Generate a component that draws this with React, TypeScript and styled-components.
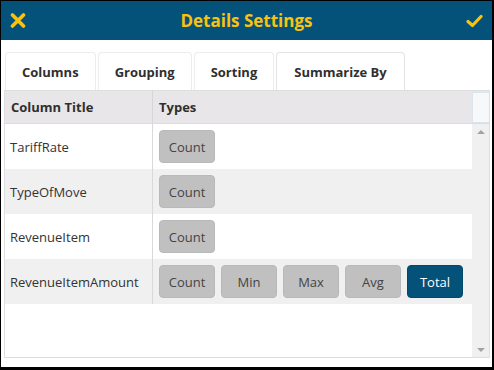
import styled, { createGlobalStyle } from "styled-components";

const GlobalStyle = createGlobalStyle`
	html, body {
		margin: 0;
		padding: 0;
		background: #000;
	}
	* {
		box-sizing: border-box;
	}
`;

const BLUE = "#04517a";
const YELLOW = "#f9c20f";

const Dialog = styled.div`
	width: 494px;
	height: 370px;
	border-style: solid;
	border-color: #000;
	border-width: 1px 2px 3px 1px;
	background: #fff;
	display: flex;
	flex-direction: column;
	font-family: "Open Sans", "Liberation Sans", sans-serif;
	color: #333;
`;

const TitleBar = styled.header`
	height: 39px;
	background: ${BLUE};
	display: flex;
	align-items: center;
	justify-content: space-between;
	padding: 0 8px 0 8px;
`;

const Title = styled.h1`
	margin: 0;
	font-size: 17px;
	font-weight: 700;
	color: ${YELLOW};
`;

const IconButton = styled.button`
	width: 18px;
	height: 18px;
	padding: 0;
	border: none;
	background: transparent;
	display: flex;
	align-items: center;
	justify-content: center;
`;

const Body = styled.div`
	flex: 1;
	display: flex;
	flex-direction: column;
	padding: 12px 2px 9px 3px;
	min-height: 0;
`;

const Tabs = styled.ul`
	display: flex;
	gap: 2px;
	margin: 0;
	padding: 0 0 0 1px;
	list-style: none;
	height: 38px;
`;

const Tab = styled.li<{ $active?: boolean }>`
	display: flex;
	align-items: center;
	padding: 0 ${({ $active }) => ($active ? "17px" : "16px")};
	border: 1px solid ${({ $active }) => ($active ? "#e3e3e3" : "#ececec")};
	border-bottom: none;
	border-radius: 4px 4px 0 0;
	font-size: 13px;
	font-weight: 700;
	color: #2f2f2f;
	background: #fff;
`;

const Grid = styled.div`
	flex: 1;
	display: flex;
	flex-direction: column;
	border: 1px solid #dedede;
	min-height: 0;
`;

const HeaderRow = styled.div`
	display: flex;
	height: 33px;
	background: #e8e6e8;
	border-bottom: 1px solid #dcdcdc;
`;

const HeaderCell = styled.div<{ $w?: number }>`
	${({ $w }) => ($w ? `width: ${$w}px;` : "flex: 1;")}
	display: flex;
	align-items: center;
	padding-left: 6px;
	font-size: 13px;
	font-weight: 700;
	color: #2f2f2f;
	border-right: ${({ $w }) => ($w ? "1px solid #d6d6d6" : "none")};
`;

const Corner = styled.div`
	width: 17px;
	margin-top: 1px;
	background: #f6f8fa;
	border: 1px solid #dde5ec;
	border-right: none;
`;

const BodyArea = styled.div`
	flex: 1;
	display: flex;
	min-height: 0;
`;

const Rows = styled.div`
	flex: 1;
`;

const Row = styled.div<{ $alt?: boolean }>`
	display: flex;
	height: 45px;
	background: ${({ $alt }) => ($alt ? "#f0f0f0" : "#fff")};
`;

const NameCell = styled.div`
	width: 148px;
	display: flex;
	align-items: center;
	padding-left: 5px;
	font-size: 13px;
	color: #333;
	border-right: 1px solid #d9d9d9;
`;

const TypesCell = styled.div`
	flex: 1;
	display: flex;
	align-items: center;
	gap: 6px;
	padding-left: 6px;
`;

const TypeButton = styled.button<{ $on?: boolean }>`
	width: 56px;
	height: 33px;
	border-radius: 4px;
	border: 1px solid ${({ $on }) => ($on ? "#03476b" : "#b9b9b9")};
	background: ${({ $on }) => ($on ? BLUE : "#c0c0c0")};
	color: ${({ $on }) => ($on ? "#fff" : "#444")};
	font-family: inherit;
	font-size: 13px;
	padding: 0;
`;

const Scrollbar = styled.div`
	width: 17px;
	background: #f0f0f0;
	display: flex;
	flex-direction: column;
	justify-content: space-between;
	align-items: center;
	padding: 6px 0 5px;
`;

const Arrow = styled.div<{ $down?: boolean }>`
	width: 0;
	height: 0;
	border-left: 4px solid transparent;
	border-right: 4px solid transparent;
	${({ $down }) =>
		$down ? "border-top: 4px solid #a3a3a3;" : "border-bottom: 4px solid #a3a3a3;"}
`;

const rows = [
	{ name: "TariffRate", types: ["Count"] },
	{ name: "TypeOfMove", types: ["Count"] },
	{ name: "RevenueItem", types: ["Count"] },
	{ name: "RevenueItemAmount", types: ["Count", "Min", "Max", "Avg", "Total"], active: "Total" },
];

function App() {
	return (
		<>
			<GlobalStyle />
			<Dialog>
				<TitleBar>
					<IconButton aria-label="Close">
						<svg width="16" height="15" viewBox="0 0 16 15">
							<path d="M2.5 2 L13.5 13 M13.5 2 L2.5 13" stroke={YELLOW} strokeWidth="3.6" strokeLinecap="round" />
						</svg>
					</IconButton>
					<Title>Details Settings</Title>
					<IconButton aria-label="Save">
						<svg width="17" height="14" viewBox="0 0 17 14">
							<path d="M2 7.5 L6.5 11.5 L15 2.5" stroke={YELLOW} strokeWidth="3.2" fill="none" strokeLinecap="round" strokeLinejoin="round" />
						</svg>
					</IconButton>
				</TitleBar>
				<Body>
					<Tabs>
						<Tab>Columns</Tab>
						<Tab>Grouping</Tab>
						<Tab>Sorting</Tab>
						<Tab $active>Summarize By</Tab>
					</Tabs>
					<Grid>
						<HeaderRow>
							<HeaderCell $w={148}>Column Title</HeaderCell>
							<HeaderCell>Types</HeaderCell>
							<Corner />
						</HeaderRow>
						<BodyArea>
							<Rows>
								{rows.map((r, i) => (
									<Row key={r.name} $alt={i % 2 === 1}>
										<NameCell>{r.name}</NameCell>
										<TypesCell>
											{r.types.map((t) => (
												<TypeButton key={t} $on={r.active === t}>
													{t}
												</TypeButton>
											))}
										</TypesCell>
									</Row>
								))}
							</Rows>
							<Scrollbar>
								<Arrow />
								<Arrow $down />
							</Scrollbar>
						</BodyArea>
					</Grid>
				</Body>
			</Dialog>
		</>
	);
}

export default App;
